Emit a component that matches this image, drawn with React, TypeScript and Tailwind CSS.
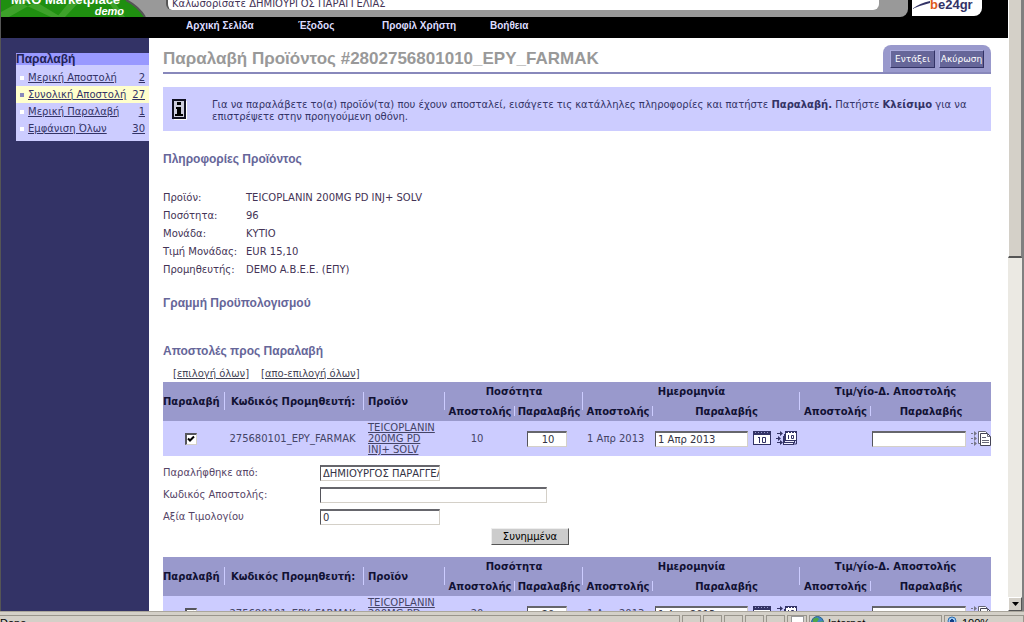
import React from 'react';
import clsx from 'clsx';

interface MenuItem {
  label: string;
  count: number;
  active?: boolean;
}

interface Shipment {
  id: string;
  code: string;
  product: string;
  quantity: string;
  date: string;
}

const navItems = [
  { label: 'Αρχική Σελίδα', width: 'w-[112px]' },
  { label: 'Έξοδος', width: 'w-[84px]' },
  { label: 'Προφίλ Χρήστη', width: 'w-[108px]' },
  { label: 'Βοήθεια', width: 'w-[80px]' }
];

const menuItems: MenuItem[] = [
  { label: 'Μερική Αποστολή', count: 2 },
  { label: 'Συνολική Αποστολή', count: 27, active: true },
  { label: 'Μερική Παραλαβή', count: 1 },
  { label: 'Εμφάνιση Όλων', count: 30 }
];

const details = [
  ['Προϊόν:', 'TEICOPLANIN 200MG PD INJ+ SOLV'],
  ['Ποσότητα:', '96'],
  ['Μονάδα:', 'ΚΥΤΙΟ'],
  ['Τιμή Μονάδας:', 'EUR 15,10'],
  ['Προμηθευτής:', 'DEMO A.B.E.E. (ΕΠΥ)']
];

const shipments: Shipment[] = [
  { id: 's1', code: '275680101_EPY_FARMAK', product: 'TEICOPLANIN 200MG PD INJ+ SOLV', quantity: '10', date: '1 Απρ 2013' },
  { id: 's2', code: '275680101_EPY_FARMAK', product: 'TEICOPLANIN 200MG PD INJ+ SOLV', quantity: '20', date: '1 Απρ 2013' }
];

const fieldClass =
  'h-4 min-w-0 bg-white border-t-2 border-l border-r border-b border-t-[#66666c] border-l-[#55555c] border-r-[#d4d0c8] border-b-[#d4d0c8] pl-[2px] text-[10px] leading-3 text-[#333344] outline-none';

const CalendarIcon = () => (
  <svg className="w-[18px] h-[14px]" viewBox="0 0 18 14" aria-hidden="true">
    <rect x="0.5" y="0.5" width="17" height="13" fill="#fff" stroke="#333366" />
    <path d="M0 0h18v4H0z" fill="#333366" />
    <path d="M2 1.500h1M5 1.500h1M8 1.500h1M11 1.500h1M14 1.500h1" stroke="#9999cc" />
    <path d="M6.500 6v6M5 6.500h1M9.500 6.500h3v5h-3z" fill="none" stroke="#333366" />
  </svg>
);

const CopyDatesIcon = () => (
  <svg className="w-[21px] h-[14px]" viewBox="0 0 21 14" aria-hidden="true">
    <path d="M1 2.500h4M0 7.500h3M1 11.500h4" stroke="#333366" />
    <path d="M4 0l3 2.500L4 5zM2 5l3 2.500L2 10zM4 9l3 2.500L4 14z" fill="#333366" />
    <rect x="7.500" y="5.500" width="10" height="8" fill="#eeeeff" stroke="#333366" />
    <rect x="8.500" y="3.500" width="10" height="8" fill="#eeeeff" stroke="#333366" />
    <rect x="9.500" y="0.500" width="11" height="9" fill="#fff" stroke="#333366" />
    <path d="M10 1.500h11" stroke="#333366" strokeDasharray="2 1" />
    <path d="M12.500 4v4M15.500 4.500h2v3h-2zM10 11.500h7M20.500 9v4h-3" fill="none" stroke="#333366" />
  </svg>
);

const CopyDocumentIcon = () => (
  <svg className="w-5 h-[15px]" viewBox="0 0 20 15" aria-hidden="true">
    <path d="M0 2.500h4M0 7.500h4M0 12.500h4" stroke="#777788" strokeDasharray="2 1" />
    <path d="M3 0l3 2.500L3 5zM3 5l3 2.500L3 10zM3 10l3 2.500L3 15z" fill="#777788" />
    <path d="M7.500 0.500h7l2 2v10h-9z" fill="#fff" stroke="#666677" />
    <path d="M9.500 2.500h7l3 3v9h-10z" fill="#fff" stroke="#444455" />
    <path d="M16.500 2.500v3h3M11 6.500h4M11 9.500h7M11 11.500h7" fill="none" stroke="#666677" />
  </svg>
);

const Header = () => (
  <header className="shrink-0 bg-black">
    <div className="flex h-[17px] items-end overflow-hidden bg-black">
      <div className="flex flex-1 h-full rounded-br-lg bg-[#999999] mr-1">
        <div className="relative w-[145px] h-full shrink-0 overflow-hidden">
          <svg className="absolute inset-0" width="145" height="17" viewBox="0 0 145 17" aria-hidden="true">
            <path d="M0 0h125q12 6 19 17H0z" fill="#1f8f10" />
            <path d="M0 12l22-12h16L8 17H0zM22 4l28 13h10L32 0zM70 0l-14 17h8L80 0zM106 0l12 17h6L112 0z" fill="#3da12a" />
            <path d="M125 0q12 6 19 17" fill="none" stroke="#555555" strokeWidth="2" />
          </svg>
          <div className="absolute bottom-px left-0 w-[123px] pl-[10px] font-['Liberation_Sans'] font-bold text-white whitespace-nowrap">
            <div className="text-[13px] leading-3">MRO Marketplace</div>
            <div className="text-[11px] leading-[10px] italic text-right">demo</div>
          </div>
        </div>
        <div className="flex flex-1 h-[10px] items-end ml-5 mr-[29px] pl-1 rounded-b-md bg-white border-l-2 border-[#555555] text-[10px] leading-3 text-[#443355] whitespace-nowrap">
          Καλωσορίσατε ΔΗΜΙΟΥΡΓΟΣ ΠΑΡΑΓΓΕΛΙΑΣ
        </div>
      </div>
      <div className="relative w-[70px] h-4 mr-[26px] self-start shrink-0 overflow-hidden rounded-br-lg bg-white">
        <svg className="absolute inset-0" width="70" height="16" viewBox="0 0 70 16" aria-hidden="true">
          <path d="M0 9Q8 3 18 1L18 3Q10 5 0 9z" fill="#333366" />
        </svg>
        <div className="absolute bottom-[5px] left-[18px] font-['Liberation_Sans'] text-[13px] leading-3 font-bold text-[#333366] whitespace-nowrap">
          <span className="text-[#e05a1a]">b</span>e24gr
        </div>
      </div>
    </div>
    <nav className="flex h-[21px] pl-[185px] pb-[3px] items-center font-['Liberation_Sans'] text-[10px] leading-3 font-bold text-[#ddddff]">
      {navItems.map(item => (
        <a key={item.label} href="#" className={item.width}>{item.label}</a>
      ))}
    </nav>
  </header>
);

const Sidebar = () => (
  <aside className="w-[148px] shrink-0 bg-[#333366] pl-[15px] pt-[15px]">
    <div className="bg-[#ccccff] pb-1">
      <h2 className="h-3 mb-1 bg-[#9999ff] font-['Liberation_Sans'] text-[12px] leading-3 font-bold text-[#222255]">Παραλαβή</h2>
      <ul>
        {menuItems.map(item => (
          <li
            key={item.label}
            className={clsx('flex h-[17px] items-center pl-1 pr-1 text-[10px] leading-3 text-[#333366]', item.active && 'bg-[#ffffcc]')}
          >
            <span className={clsx('size-1 mr-1 shrink-0', item.active ? 'bg-[#8888bb]' : 'bg-white')}></span>
            <a href="#" className="flex-1 underline whitespace-nowrap">{item.label}</a>
            <a href="#" className="underline">{item.count}</a>
          </li>
        ))}
      </ul>
    </div>
  </aside>
);

const SectionTitle: React.FC<{ className?: string; children: React.ReactNode }> = ({ className, children }) => (
  <h2 className={clsx("font-['Liberation_Sans'] text-[12px] leading-4 font-bold text-[#666699]", className)}>{children}</h2>
);

type HeadCellProps = React.ThHTMLAttributes<HTMLTableCellElement> & { divider?: 'tall' | 'short' };

// A tall divider reaches over both header rows, a short one stays in its own
const HeadCell: React.FC<HeadCellProps> = ({ divider, children, ...rest }) => (
  <th {...rest} className={clsx('relative p-0 h-[19px] align-middle whitespace-nowrap', rest.rowSpan ? 'text-left' : 'text-center')}>
    {children}
    {divider === 'tall' && <span className="absolute right-0 top-[10px] z-10 h-[18px] w-px bg-[#ccccff]"></span>}
    {divider === 'short' && <span className="absolute right-0 top-1 h-[10px] w-px bg-[#ccccff]"></span>}
  </th>
);

const ShipmentBlock: React.FC<{ shipment: Shipment }> = ({ shipment }) => (
  <section className="mb-3">
    <table className="w-full table-fixed border-collapse text-[10px] leading-3">
      <colgroup>
        <col className="w-[62px]" />
        <col className="w-[139px]" />
        <col className="w-[81px]" />
        <col className="w-[70px]" />
        <col className="w-[68px]" />
        <col className="w-[70px]" />
        <col className="w-[147px]" />
        <col className="w-[71px]" />
        <col className="w-[120px]" />
      </colgroup>
      <thead className="bg-[#9999cc] text-[#111133]">
        <tr className="h-5">
          <HeadCell rowSpan={2} divider="tall">Παραλαβή</HeadCell>
          <HeadCell rowSpan={2} divider="tall"><span className="pl-[6px]">Κωδικός Προμηθευτή:</span></HeadCell>
          <HeadCell rowSpan={2} divider="tall"><span className="pl-1">Προϊόν</span></HeadCell>
          <HeadCell colSpan={2} divider="tall">Ποσότητα</HeadCell>
          <HeadCell colSpan={2} divider="tall">Ημερομηνία</HeadCell>
          <HeadCell colSpan={2}>Τιμ/γίο-Δ. Αποστολής</HeadCell>
        </tr>
        <tr>
          <HeadCell divider="short">Αποστολής</HeadCell>
          <HeadCell>Παραλαβής</HeadCell>
          <HeadCell divider="short">Αποστολής</HeadCell>
          <HeadCell>Παραλαβής</HeadCell>
          <HeadCell divider="short">Αποστολής</HeadCell>
          <HeadCell>Παραλαβής</HeadCell>
        </tr>
      </thead>
      <tbody className="bg-[#ccccff] text-[#444466]">
        <tr className="h-[35px]">
          <td className="p-0 pr-[6px]">
            <span className="relative mx-auto block size-3">
              <input
                type="checkbox"
                defaultChecked
                aria-label="Παραλαβή"
                className="block size-3 appearance-none bg-white border-t-2 border-l-2 border-r border-b border-t-[#55555c] border-l-[#55555c] border-r-[#d4d0c8] border-b-[#d4d0c8]"
              />
              <svg className="absolute inset-0 pointer-events-none" width="12" height="12" viewBox="0 0 12 12" aria-hidden="true">
                <path d="M3 5.500l2 2 4-4" fill="none" stroke="#000" strokeWidth="2" />
              </svg>
            </span>
          </td>
          <td className="p-0 pr-1 text-center whitespace-nowrap">{shipment.code}</td>
          <td className="p-0 pl-1 leading-[11px]"><a href="#" className="block w-[74px] underline">{shipment.product}</a></td>
          <td className="p-0 pr-[6px] text-center">{shipment.quantity}</td>
          <td className="p-0 pr-1">
            <input aria-label="Ποσότητα παραλαβής" defaultValue={shipment.quantity} className={`${fieldClass} block mx-auto w-10 text-center`} />
          </td>
          <td className="p-0 pl-1 whitespace-nowrap">{shipment.date}</td>
          <td className="p-0">
            <div className="flex items-start pl-[2px] gap-[5px]">
              <input aria-label="Ημερομηνία παραλαβής" defaultValue={shipment.date} className={`${fieldClass} flex-1`} />
              <button type="button" aria-label="Ημερολόγιο"><CalendarIcon /></button>
              <button type="button" aria-label="Αντιγραφή ημερομηνίας" className="mr-[3px]"><CopyDatesIcon /></button>
            </div>
          </td>
          <td className="p-0"></td>
          <td className="p-0">
            <div className="flex items-start pl-px gap-[5px]">
              <input aria-label="Τιμολόγιο παραλαβής" className={`${fieldClass} flex-1`} />
              <button type="button" aria-label="Αντιγραφή τιμολογίου"><CopyDocumentIcon /></button>
            </div>
          </td>
        </tr>
      </tbody>
    </table>

    <div className="mt-[6px] grid grid-cols-[157px_1fr] auto-rows-[22px] items-center text-[10px] leading-3 text-[#554466]">
      <label htmlFor={`${shipment.id}-from`}>Παραλήφθηκε από:</label>
      <input id={`${shipment.id}-from`} defaultValue="ΔΗΜΙΟΥΡΓΟΣ ΠΑΡΑΓΓΕΛΙΑΣ" className={`${fieldClass} w-[120px]`} />
      <label htmlFor={`${shipment.id}-code`}>Κωδικός Αποστολής:</label>
      <input id={`${shipment.id}-code`} className={`${fieldClass} w-[227px]`} />
      <label htmlFor={`${shipment.id}-value`}>Αξία Τιμολογίου</label>
      <input id={`${shipment.id}-value`} defaultValue="0" className={`${fieldClass} w-[120px]`} />
    </div>
    <div className="flex pl-[328px]">
      <button
        type="button"
        className="w-[78px] h-[17px] bg-[#cccccc] border border-t-[#eeeeee] border-l-[#eeeeee] border-r-[#555555] border-b-[#555555] text-[10px] leading-3 text-black"
      >
        Συνημμένα
      </button>
    </div>
  </section>
);

const ScrollBar = () => (
  <div className="flex w-4 shrink-0 flex-col bg-[#ebe9e3] border-r-2 border-[#808080]">
    <div className="h-[258px] bg-[#d4d0c8] border-l border-l-white border-r border-r-[#808080] border-b-2 border-b-[#555555]"></div>
    <div className="flex-1"></div>
    <button
      type="button"
      aria-label="Κύλιση κάτω"
      className="flex h-[14px] items-center justify-center bg-[#d4d0c8] border border-t-white border-l-white border-r-[#555555] border-b-[#555555]"
    >
      <svg width="7" height="4" viewBox="0 0 7 4" aria-hidden="true"><path d="M0 0h7L3.500 4z" fill="#000" /></svg>
    </button>
  </div>
);

const StatusBar = () => (
  <footer className="flex h-[11px] shrink-0 overflow-hidden bg-[#d4d0c8] border-t border-[#aaa69c] pt-[3px] gap-[2px] font-['Liberation_Sans'] text-[11px] leading-[14px] text-black">
    <div className="flex-1 h-4 border-t border-r border-[#99958c]">Done</div>
    {[0, 1, 2, 3, 4].map(i => (
      <div key={i} className="w-[19px] h-4 border border-[#99958c]"></div>
    ))}
    <div className="w-[20px] h-4 border border-[#99958c]">
      <div className="mx-auto w-[13px] h-3 bg-white border border-[#999999]"></div>
    </div>
    <div className="flex w-[133px] h-4 gap-1 border border-[#99958c] pl-px">
      <svg width="13" height="13" viewBox="0 0 13 13" aria-hidden="true">
        <circle cx="6.500" cy="6.500" r="6" fill="#3f86c6" stroke="#27608f" />
        <path d="M2 3q4-3 6 0l-2 3-4 2zM8 6l4-1-1 5-3 1z" fill="#4fa64a" />
      </svg>
      Internet
    </div>
    <div className="flex w-[80px] h-4 gap-1 border border-[#99958c] pl-px">
      <svg width="12" height="12" viewBox="0 0 12 12" aria-hidden="true">
        <circle cx="6" cy="5" r="4" fill="#9cc8f0" stroke="#2f6db0" />
        <path d="M6 3v4M4 5h4" stroke="#123f88" strokeWidth="2" />
      </svg>
      100%
    </div>
  </footer>
);

export default function App() {
  return (
    <div className="flex h-screen flex-col overflow-hidden bg-white font-['DejaVu_Sans',Verdana,sans-serif]">
      <div className="flex min-h-0 flex-1 border-l border-[#555555]">
        <div className="flex min-w-0 flex-1 flex-col overflow-hidden">
          <Header />
          <div className="flex min-h-0 flex-1">
            <Sidebar />
            <main className="min-w-0 flex-1 overflow-hidden pl-[14px] pr-[17px] pt-[7px]">
              <div className="flex h-[29px] items-start justify-between border-b-2 border-[#8888bb]">
                <h1 className="pt-1 font-['Liberation_Sans'] text-[17px] leading-5 font-bold text-[#999999] whitespace-nowrap">
                  Παραλαβή Προϊόντος #2802756801010_EPY_FARMAK
                </h1>
                <div className="flex h-full w-[108px] shrink-0 items-center justify-center gap-1 rounded-t-lg bg-[#9999cc]">
                  {['Εντάξει', 'Ακύρωση'].map(label => (
                    <button
                      key={label}
                      type="button"
                      className="w-[45px] h-[18px] bg-[#666699] border border-t-[#aaaadd] border-l-[#aaaadd] border-r-[#333366] border-b-[#333366] text-[9px] leading-3 text-white"
                    >
                      {label}
                    </button>
                  ))}
                </div>
              </div>

              <div className="mt-[13px] flex h-11 items-center bg-[#ccccff]">
                <svg className="ml-[9px] w-[15px] h-[21px] shrink-0" viewBox="0 0 15 21" aria-hidden="true">
                  <path d="M2 20.500h12.500V2" fill="none" stroke="#fff" />
                  <rect x="1" y="1" width="12" height="18" fill="#ccccdd" stroke="#111122" strokeWidth="2" />
                  <path d="M5 3h4v3H5zM4 8h5v7h2v2H3v-2h2v-5H4z" fill="#000" />
                </svg>
                <p className="pl-[25px] pr-5 pt-[3px] text-[10px] leading-3 text-[#333366]">
                  Για να παραλάβετε το(α) προϊόν(τα) που έχουν αποσταλεί, εισάγετε τις κατάλληλες πληροφορίες και πατήστε <b>Παραλαβή.</b> Πατήστε <b>Κλείσιμο</b> για να επιστρέψετε στην προηγούμενη οθόνη.
                </p>
              </div>

              <SectionTitle className="mt-5">Πληροφορίες Προϊόντος</SectionTitle>
              <dl className="mt-[22px] grid grid-cols-[83px_1fr] text-[10px] leading-[18px] text-[#443355]">
                {details.map(([label, value]) => (
                  <React.Fragment key={label}>
                    <dt className="whitespace-nowrap">{label}</dt>
                    <dd>{value}</dd>
                  </React.Fragment>
                ))}
              </dl>

              <SectionTitle className="mt-4">Γραμμή Προϋπολογισμού</SectionTitle>
              <SectionTitle className="mt-8">Αποστολές προς Παραλαβή</SectionTitle>
              <div className="mt-[7px] flex gap-3 pl-[10px] text-[10px] leading-4 text-[#444455]">
                <span>[<a href="#" className="underline">επιλογή όλων</a>]</span>
                <span>[<a href="#" className="underline">απο-επιλογή όλων</a>]</span>
              </div>

              {shipments.map(shipment => (
                <ShipmentBlock key={shipment.id} shipment={shipment} />
              ))}
            </main>
          </div>
        </div>
        <ScrollBar />
      </div>
      <StatusBar />
    </div>
  );
}
